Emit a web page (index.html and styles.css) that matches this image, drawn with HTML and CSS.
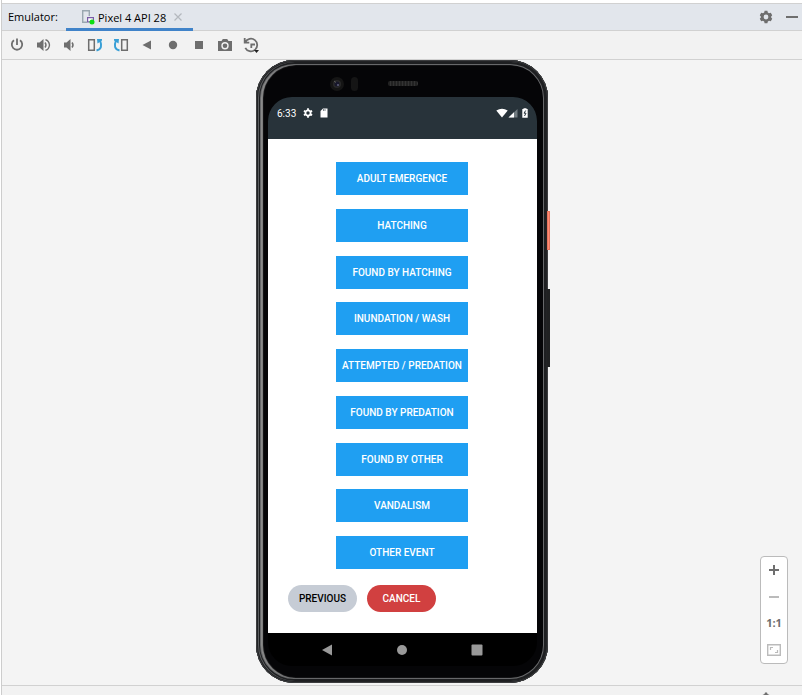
FILE: index.html
```html
<!DOCTYPE html>
<html lang="en">
<head>
<meta charset="utf-8">
<title>Emulator</title>
<link rel="stylesheet" href="styles.css">
</head>
<body>
<div class="gutter"></div>
<div class="window">
  <header class="tabbar">
    <span class="title">Emulator:</span>
    <div class="tab">
      <svg width="14" height="16" viewBox="0 0 14 16"><path d="M6 13.200H1.700V1.700h6.600V7" fill="none" stroke="#9aa7b0" stroke-width="1.400"/><path d="M6.600 8.600h5.800v4.300H6.600z" fill="#fff" stroke="#7a5ba6" stroke-width="1.200"/><circle cx="11" cy="13" r="2.500" fill="#0be012"/></svg>
      <span>Pixel 4 API 28</span>
      <button class="icon" aria-label="Close tab"><svg width="8" height="8" viewBox="0 0 8 8"><path d="M.5.5l7 7M7.500.5l-7 7" stroke="#b4b8be" stroke-width="1.200"/></svg></button>
    </div>
    <div class="window-tools">
      <button class="icon" aria-label="Settings"><svg width="14" height="14" viewBox="0 0 14 14"><path fill="#6e6e6e" fill-rule="evenodd" d="M5.600.800h2.800l.4 1.800 1.200.7 1.800-.5 1.400 2.500L11.900 7l1.300 1.700-1.400 2.500-1.800-.5-1.200.7-.4 1.800H5.600l-.4-1.800-1.200-.7-1.800.5L.8 8.700 2.100 7 .8 5.300l1.400-2.500 1.800.5 1.200-.7zM7 4.600a2.400 2.400 0 1 0 0 4.800 2.400 2.400 0 0 0 0-4.800z"/></svg></button>
      <button class="icon" aria-label="Hide"><svg width="12" height="14" viewBox="0 0 12 14"><path d="M0 6h12v2H0z" fill="#6e6e6e"/></svg></button>
    </div>
  </header>
  <nav class="toolbar" aria-label="Emulator controls">
    <button class="icon" aria-label="Power"><svg viewBox="0 0 16 16"><path d="M5 3.300a5.200 5.200 0 1 0 6 0M8 1.500V8" fill="none" stroke="#6e6e6e" stroke-width="1.800"/></svg></button>
    <button class="icon" aria-label="Volume up"><svg viewBox="0 0 16 16"><path d="M2 5.500h2.500L8.500 2v12l-4-3.500H2z" fill="#6e6e6e"/><path d="M10 5.500q2 2.500 0 5M10.500 2.700q3.500.8 4 5.300-.5 4.500-4 5.300" fill="none" stroke="#6e6e6e" stroke-width="1.400"/></svg></button>
    <button class="icon" aria-label="Volume down"><svg viewBox="0 0 16 16"><path d="M3 5.500h2.500L9.500 2v12l-4-3.500H3z" fill="#6e6e6e"/><path d="M11 5.500q2 2.500 0 5" fill="none" stroke="#6e6e6e" stroke-width="1.500"/></svg></button>
    <button class="icon" aria-label="Rotate left"><svg viewBox="0 0 16 16"><path d="M1.700 2.700h5.600v10.600H1.700z" fill="none" stroke="#6e6e6e" stroke-width="1.500"/><path d="M9.500 13.500c5-1 5.500-5 3.700-9.500" fill="none" stroke="#389fd6" stroke-width="2"/><path d="M10 2h5v1.500L10.500 6.500z" fill="#389fd6"/></svg></button>
    <button class="icon" aria-label="Rotate right"><svg viewBox="0 0 16 16"><path d="M8.700 2.700h5.600v10.600H8.700z" fill="none" stroke="#6e6e6e" stroke-width="1.500"/><path d="M6.500 13.500c-5-1-5.500-5-3.700-9.500" fill="none" stroke="#389fd6" stroke-width="2"/><path d="M6 2H1v1.500L5.500 6.500z" fill="#389fd6"/></svg></button>
    <button class="icon" aria-label="Back"><svg viewBox="0 0 16 16"><path d="M12 3.500v9L3.500 8z" fill="#6e6e6e"/></svg></button>
    <button class="icon" aria-label="Home"><svg viewBox="0 0 16 16"><circle cx="8" cy="8" r="4.200" fill="#6e6e6e"/></svg></button>
    <button class="icon" aria-label="Overview"><svg viewBox="0 0 16 16"><path d="M4 4h8v8H4z" fill="#6e6e6e"/></svg></button>
    <button class="icon" aria-label="Take screenshot"><svg viewBox="0 0 16 16"><path fill="#6e6e6e" d="M1 4h3.500l1.300-2h4.400l1.300 2H15v10H1z"/><circle cx="8" cy="8.700" r="3" fill="#6e6e6e" stroke="#f2f2f2" stroke-width="1.400"/></svg></button>
    <button class="icon" aria-label="Snapshots"><svg viewBox="0 0 16 16"><path d="M2.300 5.200a6.300 6.300 0 1 1 0 5.600M1.700 1v4.600h4.600M12 7.500H8.300V11" fill="none" stroke="#6e6e6e" stroke-width="1.800"/><path d="M11 13h5l-2.500 3z" fill="#222"/></svg></button>
  </nav>
  <main class="stage">
    <div class="phone">
      <div class="power-key"></div>
      <div class="volume-key"></div>
      <div class="earpiece">
        <svg width="30" height="16" viewBox="0 0 30 16"><circle cx="8" cy="8" r="7" fill="#151515"/><circle cx="8" cy="8" r="4" fill="#292929"/><circle cx="8" cy="8" r="2.500" fill="#17172b"/><circle cx="9" cy="9" r="1" fill="#62627c"/><path d="M5 5l2 1.500" stroke="#5c5c5c"/><rect x="22" y="1" width="7" height="14" rx="3.500" fill="#151515"/></svg>
        <div class="speaker"></div>
      </div>
      <div class="screen">
        <div class="status">
          <time>6:33</time>
          <svg width="10" height="10" viewBox="0 0 10 10"><circle cx="5" cy="5" r="2.600" fill="none" stroke="#fff" stroke-width="1.800"/><path d="M5 .3v2M5 7.700v2M.9 2.700l1.700 1M7.400 6.300l1.700 1M.9 7.300l1.700-1M7.400 3.700l1.700-1" stroke="#fff" stroke-width="1.800"/></svg>
          <svg width="8" height="10" viewBox="0 0 8 10"><path d="M3 .5h4.500v9h-7V3z" fill="#fff"/><path d="M3.500 1v2M5 1v2" stroke="#28333a" stroke-width=".6"/></svg>
          <div class="signals">
            <svg width="12" height="10" viewBox="0 0 12 10"><path d="M.3 2.500Q6-1 11.700 2.500L6 9.500z" fill="#fff"/></svg>
            <svg width="10" height="10" viewBox="0 0 10 10"><path d="M9.500 1v8.500H.5z" fill="#717b80"/><path d="M6 4.300v5.200H.5z" fill="#fff"/></svg>
            <svg width="6" height="10" viewBox="0 0 6 10"><path d="M1.500 1V.3h3V1H5.700v8.700H.3V1z" fill="#fff"/><path d="M3.700 2.500L2 5.200h2L2.500 8" fill="none" stroke="#28333a"/></svg>
          </div>
        </div>
        <div class="app">
          <div class="events">
            <button class="event">ADULT EMERGENCE</button>
            <button class="event">HATCHING</button>
            <button class="event">FOUND BY HATCHING</button>
            <button class="event">INUNDATION / WASH</button>
            <button class="event">ATTEMPTED / PREDATION</button>
            <button class="event">FOUND BY PREDATION</button>
            <button class="event">FOUND BY OTHER</button>
            <button class="event">VANDALISM</button>
            <button class="event">OTHER EVENT</button>
          </div>
          <div class="actions">
            <button class="pill previous">PREVIOUS</button>
            <button class="pill cancel">CANCEL</button>
          </div>
        </div>
        <div class="android-nav">
          <button class="icon" aria-label="Android back"><svg width="12" height="12" viewBox="0 0 12 12"><path d="M11 .5v11L1 6z" fill="#999"/></svg></button>
          <button class="icon" aria-label="Android home"><svg width="12" height="12" viewBox="0 0 12 12"><circle cx="6" cy="6" r="5" fill="#999"/></svg></button>
          <button class="icon" aria-label="Android overview"><svg width="12" height="12" viewBox="0 0 12 12"><rect x=".5" y=".5" width="11" height="11" rx="1" fill="#999"/></svg></button>
        </div>
      </div>
    </div>
    <div class="zoom">
      <button class="icon" aria-label="Zoom in"><svg viewBox="0 0 16 16"><path d="M3 8h10M8 3v10" stroke="#6e6e6e" stroke-width="2"/></svg></button>
      <button class="icon" aria-label="Zoom out"><svg viewBox="0 0 16 16"><path d="M3 7h10v2H3z" fill="#bbb"/></svg></button>
      <button class="icon ratio">1:1</button>
      <button class="icon" aria-label="Fit to window"><svg viewBox="0 0 16 16"><path d="M1.700 2.700h12.600v10.600H1.700z" fill="none" stroke="#bbb" stroke-width="1.400"/><path d="M4.500 8V5.500H7M9 10.500h2.500V8" fill="none" stroke="#bbb" stroke-width="1.200"/></svg></button>
    </div>
  </main>
  <footer class="footer"><svg width="12" height="12" viewBox="0 0 12 12"><path fill="#6e6e6e" d="M5 .5h2L7.500 2l3 1.500V12h-9V3.500l3-1.500z"/></svg></footer>
</div>
</body>
</html>
```
FILE: styles.css
```css
* { box-sizing: border-box; }

body {
  margin: 0;
  height: 100vh;
  display: flex;
  overflow: hidden;
  background: #f2f2f2;
  font-family: "Open Sans", sans-serif;
  font-size: 11px;
  color: #000;
}

button {
  margin: 0;
  padding: 0;
  border: 0;
  background: none;
  font: inherit;
  color: inherit;
}

svg { display: block; }

.icon {
  display: flex;
  align-items: center;
  justify-content: center;
}

.gutter {
  width: 2px;
  background: #fff;
  border-right: 1px solid #cdcdcd;
}

.window {
  flex: 1;
  display: flex;
  flex-direction: column;
  border-top: 3px solid #fff;
}

.tabbar {
  height: 28px;
  display: flex;
  align-items: stretch;
  padding-left: 6px;
  background: #e2e6ec;
  border-top: 1px solid #d1d1d1;
  border-bottom: 1px solid #d1d1d1;
}

.title {
  width: 58px;
  line-height: 26px;
}

.tab {
  display: flex;
  align-items: center;
  gap: 3px;
  height: 27px;
  padding: 2px 11px 0 15px;
  border-bottom: 3px solid #4083c9;
}

.tab .icon { margin-left: 5px; }

.window-tools {
  display: flex;
  align-items: center;
  gap: 13px;
  margin-left: auto;
  padding-right: 4px;
}

.toolbar {
  height: 29px;
  display: flex;
  align-items: center;
  gap: 10px;
  padding-left: 7px;
  border-bottom: 1px solid #d1d1d1;
}

.toolbar svg, .zoom svg {
  width: 16px;
  height: 16px;
}

.stage {
  position: relative;
  flex: 1;
  display: flex;
  justify-content: center;
  background: #f4f4f4;
  padding-bottom: 2px;
}

.phone {
  position: relative;
  width: 292px;
  display: flex;
  flex-direction: column;
  padding: 0 11px 17px 12px;
  border-radius: 38px;
  background: #050507;
  box-shadow:
    inset 0 0 0 1px #3c3d3f,
    inset 0 0 0 2px #222325,
    inset 1px 0 0 2px #5c5e60,
    inset 0 0 0 4px #1e1f21,
    inset 0 0 0 5px #67686a,
    inset 2px 0 1px 5px #8a8a8a;
}

.power-key, .volume-key {
  position: absolute;
  left: calc(100% - 1px);
  width: 3px;
}

.power-key {
  top: 151px;
  height: 39px;
  background: #ff8c74;
  border: 1px solid #e8745d;
}

.volume-key {
  top: 229px;
  height: 78px;
  background: #202122;
}

.earpiece {
  height: 37px;
  display: flex;
  align-items: center;
  gap: 29px;
  padding: 10px 0 0 61px;
}

.speaker {
  width: 30px;
  height: 5px;
  border-radius: 2px;
  background: repeating-linear-gradient(90deg, #222 0 2px, #333 2px 3px);
}

.screen {
  flex: 1;
  display: flex;
  flex-direction: column;
  overflow: hidden;
  border-radius: 24px;
  background: #000;
  font-family: Roboto, sans-serif;
}

.status {
  height: 42px;
  display: flex;
  align-items: flex-start;
  gap: 7px;
  padding: 11px 9px 0;
  background: #28333a;
  color: #fff;
  font-size: 10px;
  line-height: 12px;
}

.signals {
  display: flex;
  margin-left: auto;
}

.signals svg:last-child { margin-left: 4px; }

.app {
  flex: 1;
  display: flex;
  flex-direction: column;
  padding: 23px 21px 21px 20px;
  background: #fff;
  font-size: 10px;
  font-weight: 500;
}

.events {
  flex: 1;
  display: flex;
  flex-direction: column;
  align-items: center;
  justify-content: space-between;
}

.event {
  width: 132px;
  height: 33px;
  background: #1f9ff2;
  color: #fff;
}

.actions {
  display: flex;
  gap: 10px;
  padding-top: 16px;
}

.pill {
  width: 69px;
  height: 27px;
  border-radius: 14px;
}

.previous { background: #c6ccd5; }

.cancel {
  background: #d14040;
  color: #fff;
}

.android-nav {
  height: 33px;
  display: flex;
  align-items: center;
  justify-content: center;
  gap: 63px;
  padding-right: 2px;
}

.zoom {
  position: absolute;
  right: 14px;
  bottom: 21px;
  width: 28px;
  height: 108px;
  display: flex;
  flex-direction: column;
  justify-content: space-around;
  align-items: center;
  border: 1px solid #bbb;
  border-radius: 4px;
  background: #fff;
}

.ratio {
  font-size: 11px;
  line-height: 16px;
  font-weight: 700;
  color: #6e6e6e;
}

.footer {
  height: 10px;
  display: flex;
  justify-content: flex-end;
  padding: 6px 30px 0 0;
  overflow: hidden;
  border-top: 1px solid #d1d1d1;
}
```
